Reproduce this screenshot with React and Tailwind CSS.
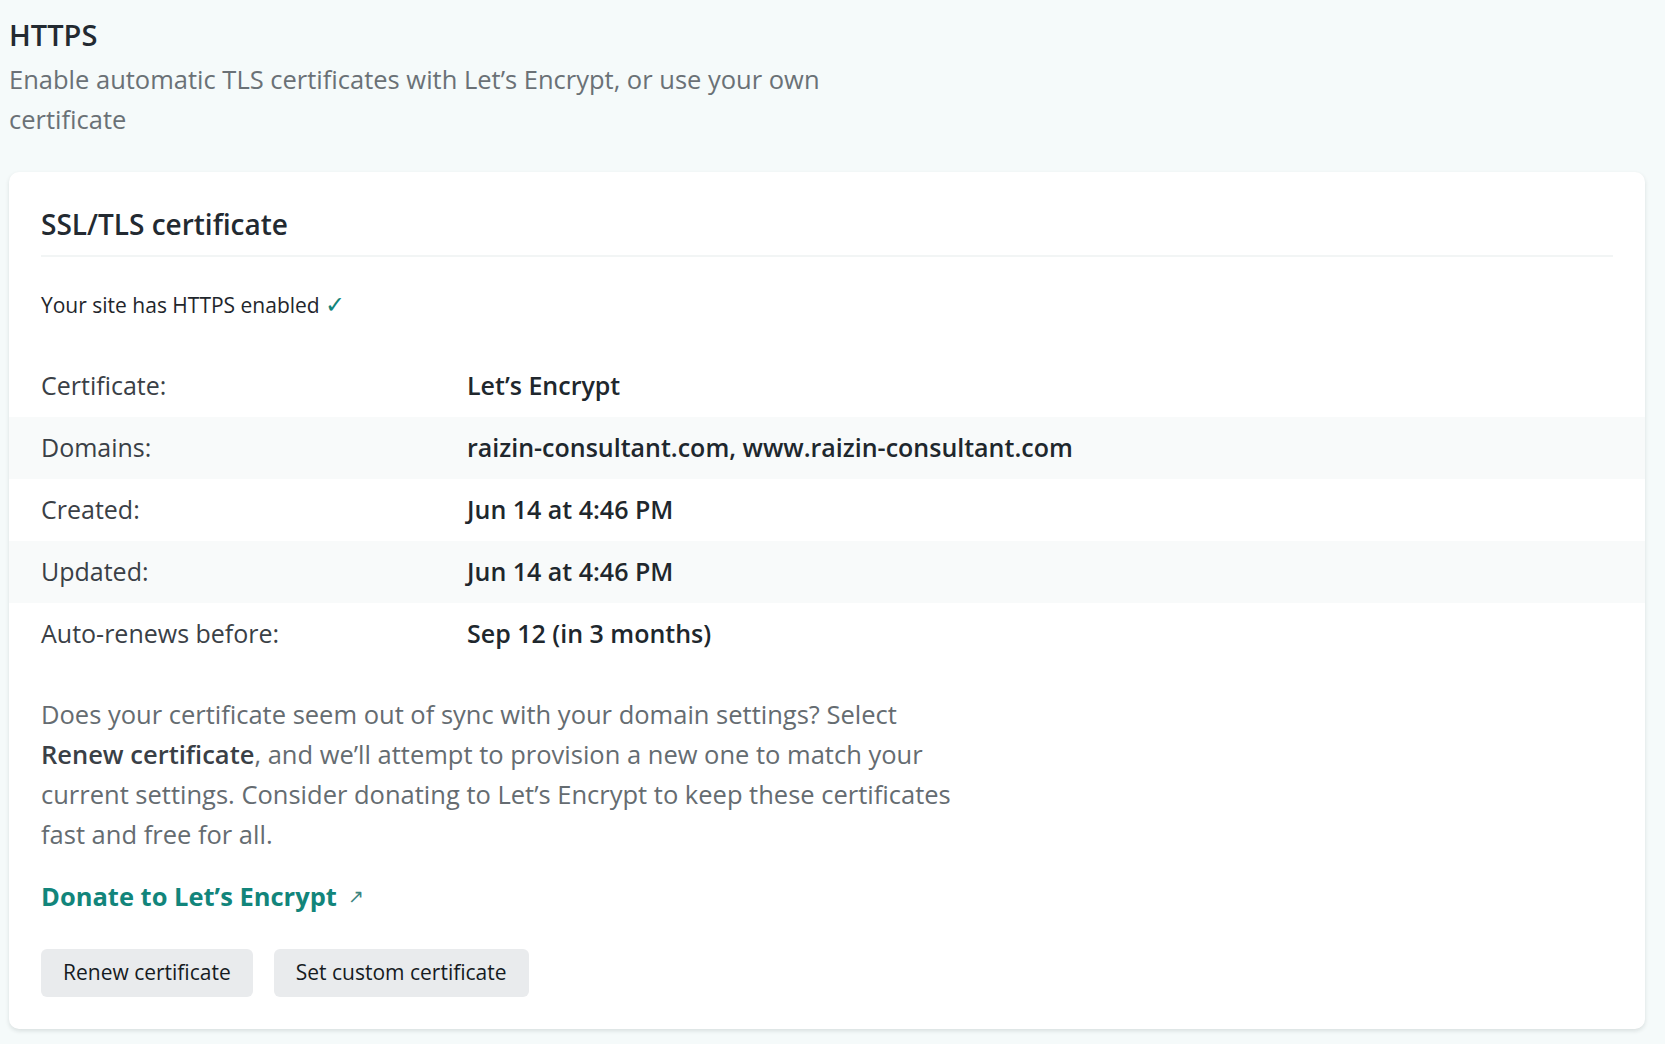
import React from "react";

const rows = [
  { label: "Certificate:", value: "Let’s Encrypt" },
  { label: "Domains:", value: "raizin-consultant.com, www.raizin-consultant.com" },
  { label: "Created:", value: "Jun 14 at 4:46 PM" },
  { label: "Updated:", value: "Jun 14 at 4:46 PM" },
  { label: "Auto-renews before:", value: "Sep 12 (in 3 months)" },
];

const App = () => {
  return (
    <div
      className="min-h-screen bg-[#f5fafa] pt-[17px] pl-[9px] pr-[20px] pb-4"
      style={{ fontFamily: '"Open Sans", "Noto Sans", sans-serif' }}
    >
      {/* section header */}
      <h2 className="text-[29px] leading-[36px] font-semibold text-[#232a31]">HTTPS</h2>
      <p className="mt-[7px] max-w-[860px] text-[25.5px] leading-[39.5px] text-[#6a7176]">
        Enable automatic TLS certificates with Let’s Encrypt, or use your own certificate
      </p>

      <div className="mt-[33px] rounded-[10px] bg-white px-8 pt-8 pb-8 shadow-[0_2px_4px_rgba(14,30,37,0.12)]">
        <h3 className="pb-[11px] text-[28px] leading-[40px] font-semibold text-[#232a31] border-b-2 border-[#f2f5f5]">
          SSL/TLS certificate
        </h3>

        <p className="mt-[34px] text-[21px] leading-[28px] font-medium text-[#1f262c]">
          Your site has HTTPS enabled{" "}
          <span className="text-[24px] leading-[20px] text-[#12857b]">✓</span>
        </p>

        <div className="-mx-8 mt-[36px]">
          {rows.map((row, i) => (
            <div
              key={row.label}
              className={
                "flex h-[62px] items-center px-8 text-[25px] " +
                (i % 2 === 1 ? "bg-[#f8fafa]" : "bg-white")
              }
            >
              <div className="w-[426px] shrink-0 text-[#3a4046]">{row.label}</div>
              <div className="font-semibold text-[#20272d]">{row.value}</div>
            </div>
          ))}
        </div>

        <p className="mt-[29px] max-w-[960px] text-[25.5px] leading-[40px] text-[#656c71]">
          Does your certificate seem out of sync with your domain settings? Select
          <br />
          <strong className="font-semibold text-[#3a4046]">Renew certificate</strong>, and we’ll
          attempt to provision a new one to match your
          <br />
          current settings. Consider donating to Let’s Encrypt to keep these certificates
          <br />
          fast and free for all.
        </p>

        <a
          href="#"
          className="mt-[26px] inline-flex items-center gap-[11px] text-[25.5px] leading-[32px] font-bold text-[#12857b]"
        >
          Donate to Let’s Encrypt
          <span className="text-[19px] font-normal text-[#3d8580]">↗</span>
        </a>

        <div className="mt-[37px] flex gap-[21px]">
          <button className="h-[48px] rounded-[6px] bg-[#e9ebed] px-[22px] text-[21px] font-medium text-[#161b1f]">
            Renew certificate
          </button>
          <button className="h-[48px] rounded-[6px] bg-[#e9ebed] px-[22px] text-[21px] font-medium text-[#161b1f]">
            Set custom certificate
          </button>
        </div>
      </div>
    </div>
  );
};

export default App;
